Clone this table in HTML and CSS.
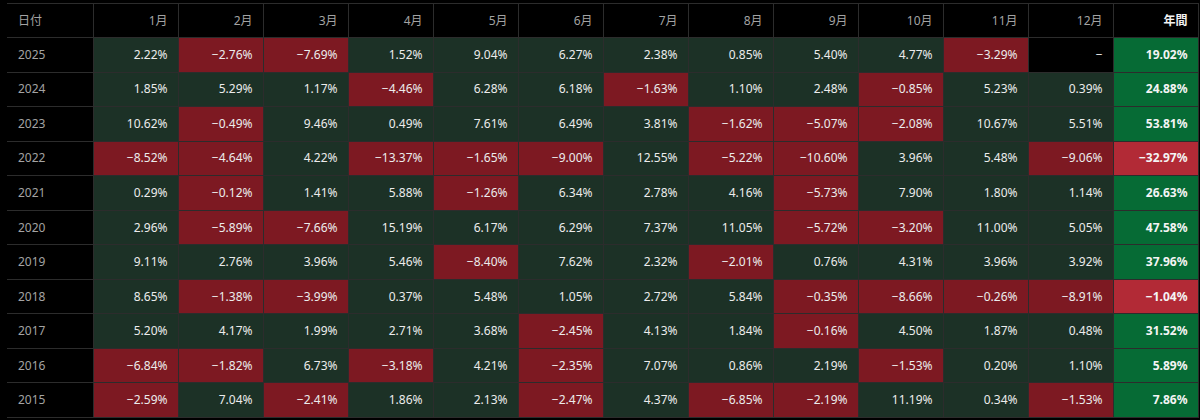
FILE: index.html
```html
<!DOCTYPE html>
<html lang="ja">
<head>
<meta charset="utf-8">
<title>月次リターン</title>
<link rel="stylesheet" href="styles.css">
</head>
<body>
<div class="wrap">
<table class="returns">
<colgroup><col class="c-date"><col span="13" class="c-m"></colgroup>
<thead>
<tr><th class="date">日付</th><th>1月</th><th>2月</th><th>3月</th><th>4月</th><th>5月</th><th>6月</th><th>7月</th><th>8月</th><th>9月</th><th>10月</th><th>11月</th><th>12月</th><th class="yh">年間</th></tr>
</thead>
<tbody>
<tr><td class="date">2025</td><td class="g">2.22%</td><td class="r">−2.76%</td><td class="r">−7.69%</td><td class="g">1.52%</td><td class="g">9.04%</td><td class="g">6.27%</td><td class="g">2.38%</td><td class="g">0.85%</td><td class="g">5.40%</td><td class="g">4.77%</td><td class="r">−3.29%</td><td class="n">−</td><td class="yg">19.02%</td></tr>
<tr><td class="date">2024</td><td class="g">1.85%</td><td class="g">5.29%</td><td class="g">1.17%</td><td class="r">−4.46%</td><td class="g">6.28%</td><td class="g">6.18%</td><td class="r">−1.63%</td><td class="g">1.10%</td><td class="g">2.48%</td><td class="r">−0.85%</td><td class="g">5.23%</td><td class="g">0.39%</td><td class="yg">24.88%</td></tr>
<tr><td class="date">2023</td><td class="g">10.62%</td><td class="r">−0.49%</td><td class="g">9.46%</td><td class="g">0.49%</td><td class="g">7.61%</td><td class="g">6.49%</td><td class="g">3.81%</td><td class="r">−1.62%</td><td class="r">−5.07%</td><td class="r">−2.08%</td><td class="g">10.67%</td><td class="g">5.51%</td><td class="yg">53.81%</td></tr>
<tr><td class="date">2022</td><td class="r">−8.52%</td><td class="r">−4.64%</td><td class="g">4.22%</td><td class="r">−13.37%</td><td class="r">−1.65%</td><td class="r">−9.00%</td><td class="g">12.55%</td><td class="r">−5.22%</td><td class="r">−10.60%</td><td class="g">3.96%</td><td class="g">5.48%</td><td class="r">−9.06%</td><td class="yr">−32.97%</td></tr>
<tr><td class="date">2021</td><td class="g">0.29%</td><td class="r">−0.12%</td><td class="g">1.41%</td><td class="g">5.88%</td><td class="r">−1.26%</td><td class="g">6.34%</td><td class="g">2.78%</td><td class="g">4.16%</td><td class="r">−5.73%</td><td class="g">7.90%</td><td class="g">1.80%</td><td class="g">1.14%</td><td class="yg">26.63%</td></tr>
<tr><td class="date">2020</td><td class="g">2.96%</td><td class="r">−5.89%</td><td class="r">−7.66%</td><td class="g">15.19%</td><td class="g">6.17%</td><td class="g">6.29%</td><td class="g">7.37%</td><td class="g">11.05%</td><td class="r">−5.72%</td><td class="r">−3.20%</td><td class="g">11.00%</td><td class="g">5.05%</td><td class="yg">47.58%</td></tr>
<tr><td class="date">2019</td><td class="g">9.11%</td><td class="g">2.76%</td><td class="g">3.96%</td><td class="g">5.46%</td><td class="r">−8.40%</td><td class="g">7.62%</td><td class="g">2.32%</td><td class="r">−2.01%</td><td class="g">0.76%</td><td class="g">4.31%</td><td class="g">3.96%</td><td class="g">3.92%</td><td class="yg">37.96%</td></tr>
<tr><td class="date">2018</td><td class="g">8.65%</td><td class="r">−1.38%</td><td class="r">−3.99%</td><td class="g">0.37%</td><td class="g">5.48%</td><td class="g">1.05%</td><td class="g">2.72%</td><td class="g">5.84%</td><td class="r">−0.35%</td><td class="r">−8.66%</td><td class="r">−0.26%</td><td class="r">−8.91%</td><td class="yr">−1.04%</td></tr>
<tr><td class="date">2017</td><td class="g">5.20%</td><td class="g">4.17%</td><td class="g">1.99%</td><td class="g">2.71%</td><td class="g">3.68%</td><td class="r">−2.45%</td><td class="g">4.13%</td><td class="g">1.84%</td><td class="r">−0.16%</td><td class="g">4.50%</td><td class="g">1.87%</td><td class="g">0.48%</td><td class="yg">31.52%</td></tr>
<tr><td class="date">2016</td><td class="r">−6.84%</td><td class="r">−1.82%</td><td class="g">6.73%</td><td class="r">−3.18%</td><td class="g">4.21%</td><td class="r">−2.35%</td><td class="g">7.07%</td><td class="g">0.86%</td><td class="g">2.19%</td><td class="r">−1.53%</td><td class="g">0.20%</td><td class="g">1.10%</td><td class="yg">5.89%</td></tr>
<tr><td class="date">2015</td><td class="r">−2.59%</td><td class="g">7.04%</td><td class="r">−2.41%</td><td class="g">1.86%</td><td class="g">2.13%</td><td class="r">−2.47%</td><td class="g">4.37%</td><td class="r">−6.85%</td><td class="r">−2.19%</td><td class="g">11.19%</td><td class="g">0.34%</td><td class="r">−1.53%</td><td class="yg">7.86%</td></tr>
</tbody>
</table>
</div>
</body>
</html>
```
FILE: styles.css
```css
html, body {
  margin: 0;
  padding: 0;
  background: #000;
}
body {
  width: 1200px;
  height: 420px;
  overflow: hidden;
  font-family: "Noto Sans", "Noto Sans CJK JP", sans-serif;
  font-size: 12px;
  color: #ececec;
}
.wrap {
  padding: 3px 0 0 7px;
}
.returns {
  border-collapse: collapse;
  table-layout: fixed;
  width: 1191px;
}
.c-date { width: 86px; }
.c-m { width: 85px; }
.returns th,
.returns td {
  border: 1px solid #2c2c2c;
  padding: 0 10px 0 11px;
  text-align: right;
  white-space: nowrap;
  line-height: 16px;
}
.returns th:first-child,
.returns td:first-child {
  border-left: none;
}
.returns thead tr { height: 34px; }
.returns tbody tr { height: 34.55px; }
.returns th {
  font-weight: normal;
  color: #a3a3a3;
  background: #000;
}
.returns th.yh {
  font-weight: bold;
  color: #f2f2f2;
}
.returns .date {
  text-align: left;
  color: #a3a3a3;
  background: #000;
}
.g { background: #1c3126; }
.r { background: #7d1922; }
.n { background: #000; }
.yg {
  background: #066b35;
  font-weight: bold;
  color: #f4f4f4;
}
.yr {
  background: #b22a36;
  font-weight: bold;
  color: #f4f4f4;
}
```
